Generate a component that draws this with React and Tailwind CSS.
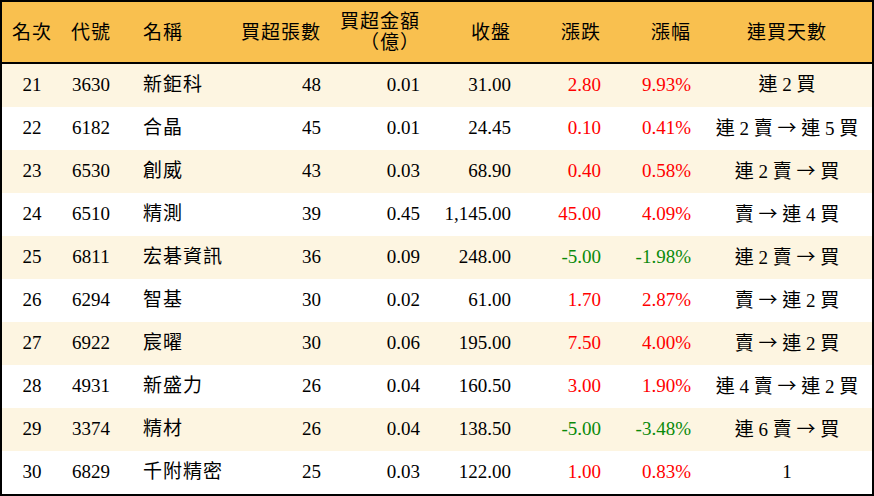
import React from 'react';

const rows = [
  ['21', '3630', '新鉅科', '48', '0.01', '31.00', '2.80', '9.93%', '連 2 買'],
  ['22', '6182', '合晶', '45', '0.01', '24.45', '0.10', '0.41%', '連 2 賣 → 連 5 買'],
  ['23', '6530', '創威', '43', '0.03', '68.90', '0.40', '0.58%', '連 2 賣 → 買'],
  ['24', '6510', '精測', '39', '0.45', '1,145.00', '45.00', '4.09%', '賣 → 連 4 買'],
  ['25', '6811', '宏碁資訊', '36', '0.09', '248.00', '-5.00', '-1.98%', '連 2 賣 → 買'],
  ['26', '6294', '智基', '30', '0.02', '61.00', '1.70', '2.87%', '賣 → 連 2 買'],
  ['27', '6922', '宸曜', '30', '0.06', '195.00', '7.50', '4.00%', '賣 → 連 2 買'],
  ['28', '4931', '新盛力', '26', '0.04', '160.50', '3.00', '1.90%', '連 4 賣 → 連 2 買'],
  ['29', '3374', '精材', '26', '0.04', '138.50', '-5.00', '-3.48%', '連 6 賣 → 買'],
  ['30', '6829', '千附精密', '25', '0.03', '122.00', '1.00', '0.83%', '1'],
];

// the arrow is drawn full-width, as in the CJK font
const Streak = ({ text }) => {
  const parts = text.split('→');
  return (
    <>
      {parts.map((p, i) => (
        <React.Fragment key={i}>
          {i > 0 && <span className="font-['Noto_Sans_CJK_TC']">→</span>}
          {p}
        </React.Fragment>
      ))}
    </>
  );
};

const Cells = ({ c, color }) => (
  <>
    <div className="w-[60px] shrink-0 text-center">{c[0]}</div>
    <div className="w-[58px] shrink-0 text-center">{c[1]}</div>
    <div className="w-[110px] shrink-0 pl-[23px] text-left tracking-[1px]">{c[2]}</div>
    <div className="w-[91px] shrink-0 text-right">{c[3]}</div>
    <div className="w-[99px] shrink-0 text-right">{c[4]}</div>
    <div className="w-[91px] shrink-0 text-right">{c[5]}</div>
    <div className={`w-[90px] shrink-0 text-right ${color}`}>{c[6]}</div>
    <div className={`w-[90px] shrink-0 text-right ${color}`}>{c[7]}</div>
    <div className="flex-1 pl-[11px] text-center whitespace-nowrap">{c[8]}</div>
  </>
);

const App = () => {
  return (
    <div
      className="w-[874px] h-[496px] border-2 border-black bg-white text-black text-[19px] overflow-hidden"
      style={{ fontFamily: '"Liberation Serif", "Noto Sans CJK TC", serif' }}
    >
      {/* Header */}
      <div className="flex items-center h-[62px] bg-[#f9c04f] border-b-2 border-black leading-[21px] tracking-[1px]">
        <Cells
          c={[
            '名次',
            '代號',
            '名稱',
            '買超張數',
            <>
              買超金額
              <br />
              （億）
            </>,
            '收盤',
            '漲跌',
            '漲幅',
            '連買天數',
          ]}
          color=""
        />
      </div>

      {/* Rows */}
      {rows.map((r, i) => {
        const color = r[6].startsWith('-') ? 'text-[#0a8a0a]' : 'text-[#ff0000]';
        return (
          <div
            key={r[0]}
            className={`flex items-center h-[43px] ${i % 2 === 0 ? 'bg-[#fdf5e1]' : 'bg-white'}`}
          >
            <Cells c={[...r.slice(0, 8), <Streak text={r[8]} />]} color={color} />
          </div>
        );
      })}
    </div>
  );
};

export default App;
